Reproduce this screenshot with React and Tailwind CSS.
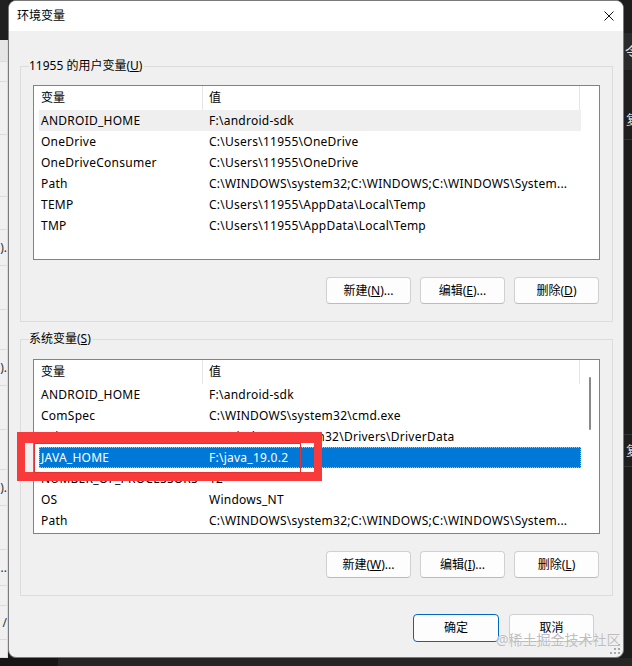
import React from "react";

const userVars = [
  ["ANDROID_HOME", "F:\\android-sdk"],
  ["OneDrive", "C:\\Users\\11955\\OneDrive"],
  ["OneDriveConsumer", "C:\\Users\\11955\\OneDrive"],
  ["Path", "C:\\WINDOWS\\system32;C:\\WINDOWS;C:\\WINDOWS\\System..."],
  ["TEMP", "C:\\Users\\11955\\AppData\\Local\\Temp"],
  ["TMP", "C:\\Users\\11955\\AppData\\Local\\Temp"],
];

const sysVars = [
  ["ANDROID_HOME", "F:\\android-sdk"],
  ["ComSpec", "C:\\WINDOWS\\system32\\cmd.exe"],
  ["DriverData", "C:\\Windows\\System32\\Drivers\\DriverData"],
  ["JAVA_HOME", "F:\\java_19.0.2"],
  ["NUMBER_OF_PROCESSORS", "12"],
  ["OS", "Windows_NT"],
  ["Path", "C:\\WINDOWS\\system32;C:\\WINDOWS;C:\\WINDOWS\\System..."],
];

const leftRows = [
  [22, "", "bg-[#e6e6e6]"],
  [20, "", ""],
  [53, "", ""],
  [62, "", ""],
  [33, "", ""],
  [36, ").", ""],
  [44, "", ""],
  [40, "", ""],
  [36, ").", ""],
  [44, "", ""],
  [40, "", ""],
  [36, ").", ""],
  [44, "", ""],
  [36, "...", ""],
  [20, "", ""],
  [34, "/", ""],
  [18, "", ""],
];

function U({ children }) {
  return <span className="underline underline-offset-[1px] decoration-[1px]">{children}</span>;
}

function ListView({ rows, selected, hovered, scroll }) {
  return (
    <div className="relative w-[567px] h-[175px] border border-[#828282] bg-white overflow-hidden">
      <div className="flex h-[24px] items-center text-black">
        <div className="w-[169px] h-full flex items-center pl-[7px] border-r border-[#e5e5e5]">变量</div>
        <div className="w-[377px] h-full flex items-center pl-[6px] border-r border-[#e5e5e5]">值</div>
      </div>
      {rows.map(([k, v], i) => {
        const isSel = i === selected;
        const isHov = i === hovered;
        return (
          <div
            key={k}
            className={
              "ml-[5px] w-[542px] h-[21px] flex items-center whitespace-nowrap tracking-[0.25px] " +
              (isSel
                ? "bg-[#0078d7] text-white outline outline-1 outline-dotted outline-[#f0b070] -outline-offset-1"
                : isHov
                ? "bg-[#efefef] text-black"
                : "text-black")
            }
          >
            <div className="w-[168px] pl-[2px] overflow-hidden">{k}</div>
            <div className="pl-[2px] overflow-hidden">{v}</div>
          </div>
        );
      })}
      {scroll && (
        <div className="absolute left-[555px] top-[17px] w-[2px] h-[53px] rounded-full bg-[#8a8a8a]" />
      )}
    </div>
  );
}

function Btn({ children, primary, w = "w-[85px]", h = "h-[27px]" }) {
  return (
    <div
      className={
        w +
        " " +
        h +
        " flex items-center justify-center rounded-[4px] bg-[#fdfdfd] text-black " +
        (primary ? "border border-[#0067c0]" : "border border-[#d0d0d0] border-b-[#bcbcbc]")
      }
    >
      {children}
    </div>
  );
}

function Group({ label, rows, selected, hovered, scroll, mt, pt, buttons }) {
  return (
    <div className={"w-[593px] flex flex-col " + mt}>
      <div className="flex h-[16px]">
        <div className="w-[9px] h-[8px] self-end border-l border-t border-[#dcdcdc]" />
        <div className="leading-[16px] text-black pr-[2px]">{label}</div>
        <div className="flex-1 h-[8px] self-end border-t border-r border-[#dcdcdc]" />
      </div>
      <div className={"border-l border-r border-b border-[#dcdcdc] px-[12px] pb-[17px] " + pt}>
        <ListView rows={rows} selected={selected} hovered={hovered} scroll={scroll} />
        <div className="mt-[17px] flex justify-end gap-[9px] pr-[1px]">{buttons}</div>
      </div>
    </div>
  );
}

export default function App() {
  return (
    <div className="relative w-[632px] h-[666px] overflow-hidden bg-[#1c1c1c] flex flex-col font-['Noto_Sans','Noto_Sans_CJK_SC',sans-serif] text-[12px]">
      <div className="flex h-[658px]">
        {/* left background strip */}
        <div className="w-[8px] flex flex-col">
          <div className="h-[40px] bg-[#202020]" />
          <div className="flex-1 flex flex-col bg-[#f0f0f0] border-r border-[#dadada]">
            {leftRows.map(([h, t, c], i) => (
              <div
                key={i}
                style={{ height: h }}
                className={"border-b border-[#dcdcdc] flex items-center justify-end overflow-hidden whitespace-nowrap text-[#333] " + c}
              >
                {t}
              </div>
            ))}
          </div>
        </div>

        {/* dialog */}
        <div className="relative w-[616px] h-[658px] rounded-[8px] border border-[#7a7a7a] bg-[#f0f0f0] flex flex-col overflow-hidden">
          <div className="h-[30px] bg-white flex items-center justify-between pl-[8px] pr-[9px]">
            <div className="text-black leading-[16px]">环境变量</div>
            <svg width="10" height="10" viewBox="0 0 10 10">
              <path d="M0.5 0.5 L9.5 9.5 M9.5 0.5 L0.5 9.5" stroke="#111" strokeWidth="1" />
            </svg>
          </div>
          <div className="flex flex-col pl-[11px] pt-[27px]">
            <Group
              label={
                <>
                  11955 的用户变量(<U>U</U>)
                </>
              }
              rows={userVars}
              selected={-1}
              hovered={0}
              mt=""
              pt="pt-[11px]"
              buttons={
                <>
                  <Btn>
                    新建(<U>N</U>)...
                  </Btn>
                  <Btn>
                    编辑(<U>E</U>)...
                  </Btn>
                  <Btn>
                    删除(<U>D</U>)
                  </Btn>
                </>
              }
            />
            <Group
              label={
                <>
                  系统变量(<U>S</U>)
                </>
              }
              rows={sysVars}
              selected={3}
              hovered={-1}
              scroll
              mt="mt-[9px]"
              pt="pt-[12px]"
              buttons={
                <>
                  <Btn>
                    新建(<U>W</U>)...
                  </Btn>
                  <Btn>
                    编辑(<U>I</U>)...
                  </Btn>
                  <Btn>
                    删除(<U>L</U>)
                  </Btn>
                </>
              }
            />
            <div className="w-[593px] mt-[18px] flex justify-end gap-[10px] pr-[19px]">
              <Btn primary w="w-[86px]" h="h-[28px]">
                确定
              </Btn>
              <Btn w="w-[85px]" h="h-[28px]">
                取消
              </Btn>
            </div>
          </div>
          {/* resize grip */}
          <svg className="absolute right-[3px] bottom-[3px]" width="10" height="10" viewBox="0 0 10 10">
            <rect x="8" y="0" width="2" height="2" fill="#a8a8a8" />
            <rect x="4" y="4" width="2" height="2" fill="#a8a8a8" />
            <rect x="8" y="4" width="2" height="2" fill="#a8a8a8" />
            <rect x="0" y="8" width="2" height="2" fill="#a8a8a8" />
            <rect x="4" y="8" width="2" height="2" fill="#a8a8a8" />
            <rect x="8" y="8" width="2" height="2" fill="#a8a8a8" />
          </svg>
        </div>

        {/* right background strip */}
        <div className="w-[8px] flex flex-col overflow-hidden whitespace-nowrap text-[13px]">
          <div className="h-[33px] bg-[#1e1e1e]" />
          <div className="h-[37px] bg-[#2b2b2b] text-[#e0e0e0] flex items-center pl-[1px]">令</div>
          <div className="h-[30px] bg-[#1f1f1f]" />
          <div className="h-[40px] bg-[#1f1f1f] border-b border-[#333] text-[#d8d8d8] flex items-center pl-[2px]">复</div>
          <div className="h-[295px] bg-[#1c1c1c] border-b border-[#333]" />
          <div className="h-[32px] bg-[#1f1f1f] border-b border-[#333] text-[#d8d8d8] flex items-center pl-[2px]">复</div>
          <div className="flex-1 bg-[#1c1c1c]" />
        </div>
      </div>
      <div className="h-[8px] flex">
        <div className="w-[58px] bg-[#161616]" />
        <div className="flex-1 bg-[#262626]" />
      </div>

      {/* red annotation overlays */}
      <div className="absolute left-[17px] top-[432px] w-[305px] h-[49px] border-t-[11px] border-l-[8px] border-r-[8px] border-b-[9px] border-[#f93a3a]" />
      <div className="absolute left-[34px] top-[443px] w-[267px] h-[30px] border border-[#e83030]" />

      {/* watermark */}
      <div className="absolute left-[496px] top-[631px] text-[14px] leading-[18px] text-[#bdbdbd] [text-shadow:0_0_1px_#fff]">
        @稀土掘金技术社区
      </div>
    </div>
  );
}
